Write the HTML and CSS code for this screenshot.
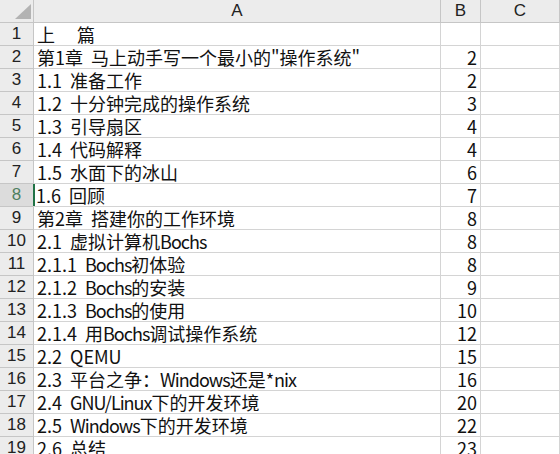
FILE: index.html
```html
<!DOCTYPE html>
<html lang="zh-CN">
<head>
    <meta charset="UTF-8">
    <title>目录</title>
    <link rel="stylesheet" href="styles.css">
</head>
<body>
    <div class="sheet">
        <div class="corner"><span class="corner-mark"></span></div>
        <div class="col-head">A</div>
        <div class="col-head">B</div>
        <div class="col-head">C</div>

        <div class="row-head">1</div><div class="cell">上　 篇</div><div class="cell num"></div><div class="cell"></div>
        <div class="row-head">2</div><div class="cell">第1章&nbsp; 马上动手写一个最小的"操作系统"</div><div class="cell num">2</div><div class="cell"></div>
        <div class="row-head">3</div><div class="cell">1.1&nbsp; 准备工作</div><div class="cell num">2</div><div class="cell"></div>
        <div class="row-head">4</div><div class="cell">1.2&nbsp; 十分钟完成的操作系统</div><div class="cell num">3</div><div class="cell"></div>
        <div class="row-head">5</div><div class="cell">1.3&nbsp; 引导扇区</div><div class="cell num">4</div><div class="cell"></div>
        <div class="row-head">6</div><div class="cell">1.4&nbsp; 代码解释</div><div class="cell num">4</div><div class="cell"></div>
        <div class="row-head">7</div><div class="cell">1.5&nbsp; 水面下的冰山</div><div class="cell num">6</div><div class="cell"></div>
        <div class="row-head active">8</div><div class="cell selected">1.6&nbsp; 回顾</div><div class="cell num">7</div><div class="cell"></div>
        <div class="row-head">9</div><div class="cell">第2章&nbsp; 搭建你的工作环境</div><div class="cell num">8</div><div class="cell"></div>
        <div class="row-head">10</div><div class="cell">2.1&nbsp; 虚拟计算机<span class="en">Bochs</span></div><div class="cell num">8</div><div class="cell"></div>
        <div class="row-head">11</div><div class="cell">2.1.1&nbsp; <span class="en">Bochs</span>初体验</div><div class="cell num">8</div><div class="cell"></div>
        <div class="row-head">12</div><div class="cell">2.1.2&nbsp; <span class="en">Bochs</span>的安装</div><div class="cell num">9</div><div class="cell"></div>
        <div class="row-head">13</div><div class="cell">2.1.3&nbsp; <span class="en">Bochs</span>的使用</div><div class="cell num">10</div><div class="cell"></div>
        <div class="row-head">14</div><div class="cell">2.1.4&nbsp; 用<span class="en">Bochs</span>调试操作系统</div><div class="cell num">12</div><div class="cell"></div>
        <div class="row-head">15</div><div class="cell">2.2&nbsp; QEMU</div><div class="cell num">15</div><div class="cell"></div>
        <div class="row-head">16</div><div class="cell">2.3&nbsp; 平台之争：<span class="en">Windows</span>还是*<span class="en">nix</span></div><div class="cell num">16</div><div class="cell"></div>
        <div class="row-head">17</div><div class="cell">2.4&nbsp; <span class="en">GNU/Linux</span>下的开发环境</div><div class="cell num">20</div><div class="cell"></div>
        <div class="row-head">18</div><div class="cell">2.5&nbsp; <span class="en">Windows</span>下的开发环境</div><div class="cell num">22</div><div class="cell"></div>
        <div class="row-head">19</div><div class="cell">2.6&nbsp; 总结</div><div class="cell num">23</div><div class="cell"></div>
    </div>
</body>
</html>
```

FILE: styles.css
```css
:root {
    --grid: #d4d4d4;
    --head-bg: #ececec;
    --head-line: #c6c6c6;
    --accent: #217346;
}

* {
    margin: 0;
    padding: 0;
    box-sizing: border-box;
}

html, body {
    height: 100%;
    overflow: hidden;
    background: white;
}

body {
    font-family: "Noto Sans CJK SC", "Noto Sans", sans-serif;
    font-size: 18px;
    color: #111;
}

.sheet {
    display: grid;
    grid-template-columns: 34px 407px 40px 1fr;
    grid-auto-rows: 23px;
}

.sheet > div {
    border-right: 1px solid var(--grid);
    border-bottom: 1px solid var(--grid);
    line-height: 22px;
    white-space: nowrap;
}

.corner,
.col-head,
.row-head {
    background: var(--head-bg);
    border-color: var(--head-line) !important;
    color: #222;
}

.corner {
    display: flex;
    justify-content: flex-end;
    align-items: flex-end;
    padding: 0 2px 3px 0;
}

.corner-mark {
    width: 0;
    height: 0;
    border-left: 16px solid transparent;
    border-bottom: 15px solid #b3b3b3;
}

.col-head,
.row-head {
    text-align: center;
    font-family: "Liberation Sans", sans-serif;
    font-size: 17px;
}

.row-head.active {
    background: #dcdcdc;
    color: #4f7f60;
}

.cell {
    padding: 0 3px;
}

/* latin words sit a little tighter than the CJK around them */
.en {
    letter-spacing: -1px;
}

.cell.selected {
    box-shadow: inset 2px 0 0 var(--accent);
    margin-left: -1px;
}

.cell.num {
    text-align: right;
}
```
